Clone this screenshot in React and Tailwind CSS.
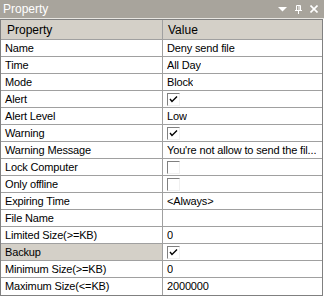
const rows = [
  { name: 'Name', value: 'Deny send file' },
  { name: 'Time', value: 'All Day' },
  { name: 'Mode', value: 'Block' },
  { name: 'Alert', check: true },
  { name: 'Alert Level', value: 'Low' },
  { name: 'Warning', check: true },
  { name: 'Warning Message', value: "You're not allow to send the fil..." },
  { name: 'Lock Computer', check: false },
  { name: 'Only offline', check: false },
  { name: 'Expiring Time', value: '<Always>' },
  { name: 'File Name', value: '' },
  { name: 'Limited Size(>=KB)', value: '0' },
  { name: 'Backup', check: true, selected: true },
  { name: 'Minimum Size(>=KB)', value: '0' },
  { name: 'Maximum Size(<=KB)', value: '2000000' },
];

function CheckBox({ checked }) {
  return (
    <span className="block w-[13px] h-[13px] border-t border-l border-t-[#808080] border-l-[#808080] border-b border-r border-b-[#f0f0f0] border-r-[#f0f0f0] bg-white relative">
      {checked && (
        <svg width="11" height="11" viewBox="0 0 11 11" className="absolute left-0 top-0">
          <path d="M2 5 L4 7.5 L9 2.5" stroke="#000" strokeWidth="1.4" fill="none" />
        </svg>
      )}
    </span>
  );
}

export default function App() {
  return (
    <div className="w-[324px] h-[297px] bg-white text-[11px] tracking-[-0.15px] text-black font-['Liberation_Sans',Arial,sans-serif] leading-none overflow-hidden">
      <div className="h-[18px] bg-[#a8a49c] flex items-center justify-between pl-[3px] pr-[6px] text-white">
        <span className="text-[12px] tracking-normal">Property</span>
        <div className="flex items-center gap-[8px]">
          <svg width="9" height="6" viewBox="0 0 9 6">
            <path d="M0 1 L9 1 L4.5 5.5 Z" fill="#fff" />
          </svg>
          <svg width="7" height="9" viewBox="0 0 7 9">
            <path d="M1.5 0.5 H5.5 V5.5 H1.5 Z M4 1 V5 M0 5.5 H7 M3.5 5.5 V9" stroke="#fff" strokeWidth="1" fill="none" />
          </svg>
          <svg width="8" height="8" viewBox="0 0 8 8">
            <path d="M0.5 0.5 L7.5 7.5 M7.5 0.5 L0.5 7.5" stroke="#fff" strokeWidth="1.6" />
          </svg>
        </div>
      </div>
      <div className="h-[1px] bg-[#e8e6e1]" />
      <div className="w-[323px] border border-[#808080]">
        <div className="flex h-[20px] bg-[#d4d0c8] border-b border-[#a0a0a0]">
          <div className="w-[162px] border-r border-[#a0a0a0] flex items-center pl-[6px] text-[12px] tracking-normal">Property</div>
          <div className="flex-1 flex items-center pl-[5px] text-[12px] tracking-normal">Value</div>
        </div>
        {rows.map((r) => (
          <div key={r.name} className="flex h-[17px] border-b border-[#a0a0a0] last:border-b-0">
            <div className={`w-[162px] border-r border-[#a0a0a0] flex items-center pl-[4px] ${r.selected ? 'bg-[#d4d0c8]' : ''}`}>
              {r.name}
            </div>
            <div className="flex-1 min-w-0 flex items-center pl-[4px] pr-[2px] whitespace-nowrap overflow-hidden">
              {r.check !== undefined ? <CheckBox checked={r.check} /> : <span className="truncate">{r.value}</span>}
            </div>
          </div>
        ))}
      </div>
    </div>
  );
}
